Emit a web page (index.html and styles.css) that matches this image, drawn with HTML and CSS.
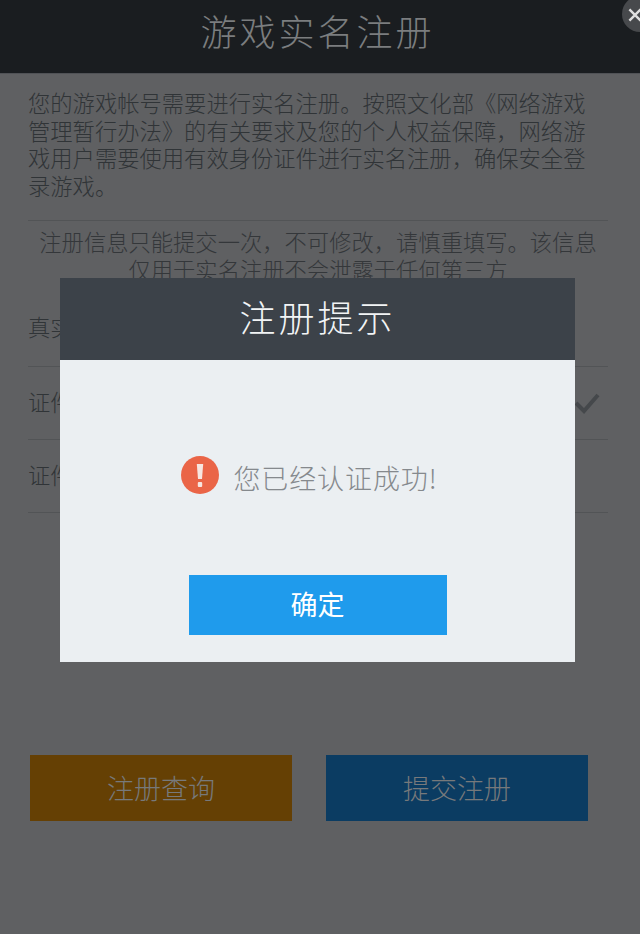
FILE: index.html
```html
<!DOCTYPE html>
<html lang="zh-CN">
<head>
<meta charset="utf-8">
<title>游戏实名注册</title>
<link rel="stylesheet" href="styles.css">
</head>
<body>
<div class="page">
  <header class="topbar"><h1 class="topbar-title">游戏实名注册</h1></header>
  <main class="content">
    <p class="intro">您的游戏帐号需要进行实名注册。按照文化部《网络游戏管理暂行办法》的有关要求及您的个人权益保障，网络游戏用户需要使用有效身份证件进行实名注册，确保安全登录游戏。</p>
    <p class="notice">注册信息只能提交一次，不可修改，请慎重填写。该信息<br>仅用于实名注册不会泄露于任何第三方</p>
    <div class="form-row first"><span>真实姓名</span></div>
    <div class="form-row"><span>证件类型</span>
      <svg class="check" viewBox="0 0 28 24" width="28" height="24"><path d="M3 12l8 8L25 4" fill="none" stroke="#45484b" stroke-width="4"/></svg>
    </div>
    <div class="form-row"><span>证件号码</span></div>
    <div class="actions">
      <button class="action orange">注册查询</button>
      <button class="action blue">提交注册</button>
    </div>
  </main>
</div>
<button class="close" aria-label="关闭"><svg viewBox="0 0 20 20" width="14" height="14"><path d="M2 2l16 16M18 2L2 18" stroke="#e0e0e0" stroke-width="3.4" fill="none"/></svg></button>
<section class="dialog">
  <h2 class="dialog-title">注册提示</h2>
  <div class="dialog-body">
    <div class="message">
      <svg class="alert" viewBox="0 0 38 38" width="38" height="38"><circle cx="19" cy="19" r="19" fill="#ea6547"/><path d="M15.8 8h6.4l-1.2 15h-4z" fill="#f7e6e0"/><rect x="16.8" y="26" width="4.4" height="5" rx="1" fill="#f7e6e0"/></svg>
      <span class="message-text">您已经认证成功!</span>
    </div>
    <button class="confirm">确定</button>
  </div>
</section>
</body>
</html>
```
FILE: styles.css
```css
* { box-sizing: border-box; }
html, body { margin: 0; padding: 0; }
body {
  position: relative;
  width: 640px;
  height: 934px;
  overflow: hidden;
  background: #5f6062;
  font-family: "Noto Sans CJK SC", "Liberation Sans", sans-serif;
  color: #303437;
}
.topbar {
  height: 74px;
  background: #1a1d20;
  display: flex;
  align-items: center;
  justify-content: center;
  border-bottom: 1px solid #505256;
}
.topbar-title {
  margin: 0 5px 13px 0;
  font-size: 36px;
  font-weight: 300;
  letter-spacing: 3px;
  line-height: 1;
  color: #7b7d7f;
}
.content { padding: 15px 32px 0 28px; }
.intro {
  margin: 0;
  font-size: 22.3px;
  line-height: 27.7px;
  font-weight: 300;
  padding: 0 10px 20px 0;
  border-bottom: 1px solid #525456;
}
.notice {
  margin: 6px 0 0;
  height: 62px;
  font-size: 22.3px;
  line-height: 28px;
  font-weight: 300;
  text-align: center;
  color: #34373a;
  white-space: nowrap;
}
.form-row {
  height: 73px;
  border-bottom: 1px solid #525456;
  display: flex;
  align-items: center;
  justify-content: space-between;
  padding-bottom: 3px;
  font-size: 22.3px;
  font-weight: 300;
}
.form-row.first { height: 78px; }
.check { margin-right: 7px; margin-top: 4px; }
.actions {
  margin-top: 242px;
  margin-left: 2px;
  display: flex;
  gap: 34px;
  width: 558px;
}
.action {
  width: 262px;
  height: 66px;
  border: 0;
  padding: 0;
  font-family: inherit;
  font-size: 27px;
  font-weight: 300;
  color: #77797b;
}
.orange { background: #654004; }
.blue { background: #0b3c62; }
.close {
  position: absolute;
  top: -4px;
  right: -18px;
  width: 36px;
  height: 36px;
  padding: 0;
  border: 0;
  border-radius: 50%;
  background: #47494c;
  display: flex;
  align-items: center;
  justify-content: center;
}
.close svg { margin: 2px 10px 0 0; }
.dialog {
  position: absolute;
  left: 60px;
  top: 278px;
  width: 515px;
  height: 384px;
  background: #ebeff2;
  display: flex;
  flex-direction: column;
}
.dialog-title {
  margin: 0;
  height: 82px;
  background: #3c4249;
  color: #f2f4f5;
  font-size: 36px;
  font-weight: 300;
  letter-spacing: 3px;
  text-align: center;
  line-height: 76px;
}
.dialog-body {
  flex: 1;
  display: flex;
  flex-direction: column;
  align-items: center;
  padding-top: 96px;
}
.message {
  display: flex;
  align-items: center;
  gap: 14px;
  height: 38px;
  margin-left: -16px;
}
.message-text {
  font-size: 27px;
  font-weight: 300;
  line-height: 38px;
  letter-spacing: .9px;
  color: #85898d;
  margin-top: 5px;
}
.confirm {
  margin-top: 81px;
  width: 258px;
  height: 60px;
  padding: 0 0 3px;
  border: 0;
  background: #1f9bec;
  color: #fff;
  font-family: inherit;
  font-size: 27px;
  font-weight: 400;
}
```
